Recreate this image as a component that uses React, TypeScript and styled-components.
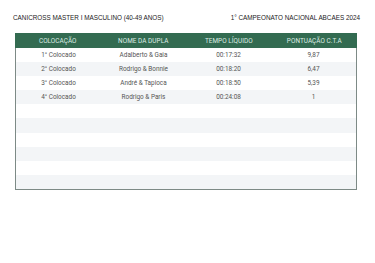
import styled, { createGlobalStyle } from "styled-components";

const GlobalStyle = createGlobalStyle`
  html, body {
    margin: 0;
    padding: 0;
    background: #ffffff;
  }
`;

const Page = styled.main`
  width: 375px;
  height: 263px;
  box-sizing: border-box;
  padding: 12px 15px 0 13px;
  display: flex;
  flex-direction: column;
`;

const TitleBar = styled.div`
  display: flex;
  justify-content: space-between;
  align-items: center;
  height: 10px;
  margin: 0 0 11px 0;
`;

const Title = styled.h1`
  margin: 0;
  font-family: "Liberation Sans", Arial, sans-serif;
  font-weight: normal;
  font-size: 6.35px;
  color: #222;
  white-space: nowrap;
`;

const Table = styled.div`
  width: 342px;
  margin-left: 2px;
  border: 1px solid #7d8a86;
  border-top: none;
  box-sizing: border-box;
  font-family: Roboto, "Liberation Sans", sans-serif;
`;

const Row = styled.div<{ $striped?: boolean }>`
  display: grid;
  grid-template-columns: repeat(4, 1fr);
  height: 14.1px;
  align-items: center;
  background: ${(p) => (p.$striped ? "#f3f5f7" : "#ffffff")};
`;

const HeadRow = styled(Row)`
  height: 15px;
  background: #336b51;
  margin: 0 -1px;
`;

const HeadCell = styled.div`
  text-align: center;
  font-size: 6.4px;
  color: #dfeee6;
  letter-spacing: 0.05px;
`;

const Cell = styled.div`
  text-align: center;
  font-size: 6.4px;
  color: #555;
`;

const results = [
  ["1° Colocado", "Adalberto & Gaia", "00:17:32", "9,87"],
  ["2° Colocado", "Rodrigo & Bonnie", "00:18:20", "6,47"],
  ["3° Colocado", "André & Tapioca", "00:18:50", "5,39"],
  ["4° Colocado", "Rodrigo & Paris", "00:24:08", "1"],
];

const TOTAL_ROWS = 10;

export default function App() {
  const rows = Array.from({ length: TOTAL_ROWS }, (_, i) => results[i] ?? ["", "", "", ""]);
  return (
    <>
      <GlobalStyle />
      <Page>
        <TitleBar>
          <Title>CANICROSS MASTER I MASCULINO (40-49 ANOS)</Title>
          <Title>1° CAMPEONATO NACIONAL ABCAES 2024</Title>
        </TitleBar>
        <Table>
          <HeadRow>
            <HeadCell>COLOCAÇÃO</HeadCell>
            <HeadCell>NOME DA DUPLA</HeadCell>
            <HeadCell>TEMPO LÍQUIDO</HeadCell>
            <HeadCell>PONTUAÇÃO C.T.A</HeadCell>
          </HeadRow>
          {rows.map((r, i) => (
            <Row key={i} $striped={i % 2 === 1}>
              {r.map((c, j) => (
                <Cell key={j}>{c}</Cell>
              ))}
            </Row>
          ))}
        </Table>
      </Page>
    </>
  );
}
